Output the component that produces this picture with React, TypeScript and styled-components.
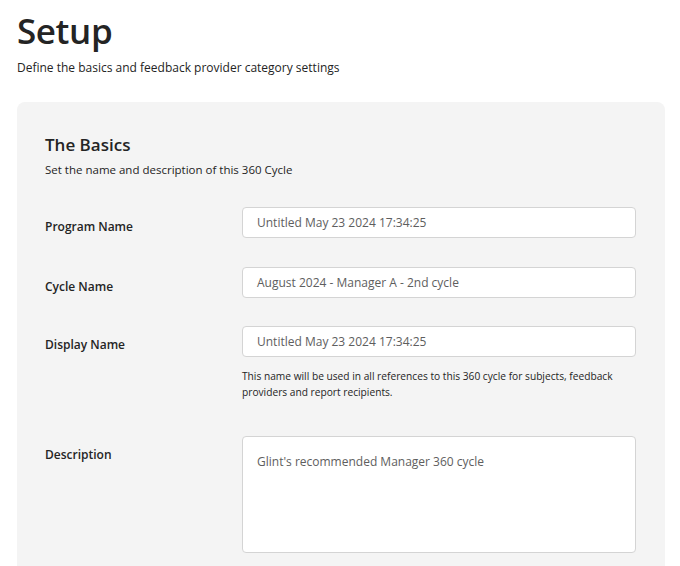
import React from "react";
import styled, { createGlobalStyle } from "styled-components";

const Global = createGlobalStyle`
  html, body { margin: 0; padding: 0; background: #ffffff; }
  body { font-family: "Open Sans", "Noto Sans", sans-serif; color: #242424; }
  * { box-sizing: border-box; }
`;

const Page = styled.div`
  padding: 8px 15px 0 17px;
`;

const Title = styled.h1`
  margin: 0;
  font-size: 35px;
  line-height: 46px;
  font-weight: 600;
  color: #242424;
  letter-spacing: -0.4px;
`;

const Subtitle = styled.p`
  margin: 6px 0 0;
  font-size: 12px;
  line-height: 16px;
  color: #242424;
`;

const Card = styled.section`
  margin-top: 26px;
  background: #f4f4f4;
  border-radius: 8px 8px 0 0;
  padding: 31px 29px 40px 28px;
  width: 648px;
`;

const CardTitle = styled.h2`
  margin: 0;
  font-size: 17px;
  line-height: 24px;
  font-weight: 600;
  color: #242424;
`;

const CardSub = styled.p`
  margin: 5px 0 0;
  font-size: 11.5px;
  line-height: 16px;
  color: #242424;
`;

const Form = styled.div`
  margin-top: 29px;
  display: flex;
  flex-direction: column;
`;

const Row = styled.div<{ $gap: number }>`
  display: grid;
  grid-template-columns: 197px 394px;
  margin-bottom: ${(p) => p.$gap}px;
`;

const Label = styled.label<{ $top: number }>`
  font-size: 12px;
  font-weight: 600;
  line-height: 16px;
  color: #242424;
  padding-top: ${(p) => p.$top}px;
`;

const Field = styled.div`
  display: flex;
  flex-direction: column;
`;

const Input = styled.div`
  height: 31px;
  background: #ffffff;
  border: 1px solid #d4d4d4;
  border-radius: 4px;
  padding: 0 14px;
  display: flex;
  align-items: center;
  font-size: 12px;
  color: #5e5e5e;
`;

const TextArea = styled.div`
  height: 117px;
  background: #ffffff;
  border: 1px solid #d4d4d4;
  border-radius: 4px;
  padding: 17px 14px;
  font-size: 12px;
  line-height: 16px;
  color: #5e5e5e;
`;

const Help = styled.p`
  margin: 11px 0 0;
  font-size: 10.2px;
  line-height: 16px;
  color: #242424;
`;

export default function App() {
  return (
    <>
      <Global />
      <Page>
        <Title>Setup</Title>
        <Subtitle>Define the basics and feedback provider category settings</Subtitle>
        <Card>
          <CardTitle>The Basics</CardTitle>
          <CardSub>Set the name and description of this 360 Cycle</CardSub>
          <Form>
            <Row $gap={29}>
              <Label $top={12}>Program Name</Label>
              <Input>Untitled May 23 2024 17:34:25</Input>
            </Row>
            <Row $gap={28}>
              <Label $top={12}>Cycle Name</Label>
              <Input>August 2024 - Manager A - 2nd cycle</Input>
            </Row>
            <Row $gap={36}>
              <Label $top={11}>Display Name</Label>
              <Field>
                <Input>Untitled May 23 2024 17:34:25</Input>
                <Help>
                  This name will be used in all references to this 360 cycle for subjects, feedback
                  providers and report recipients.
                </Help>
              </Field>
            </Row>
            <Row $gap={0}>
              <Label $top={11}>Description</Label>
              <TextArea>Glint's recommended Manager 360 cycle</TextArea>
            </Row>
          </Form>
        </Card>
      </Page>
    </>
  );
}
